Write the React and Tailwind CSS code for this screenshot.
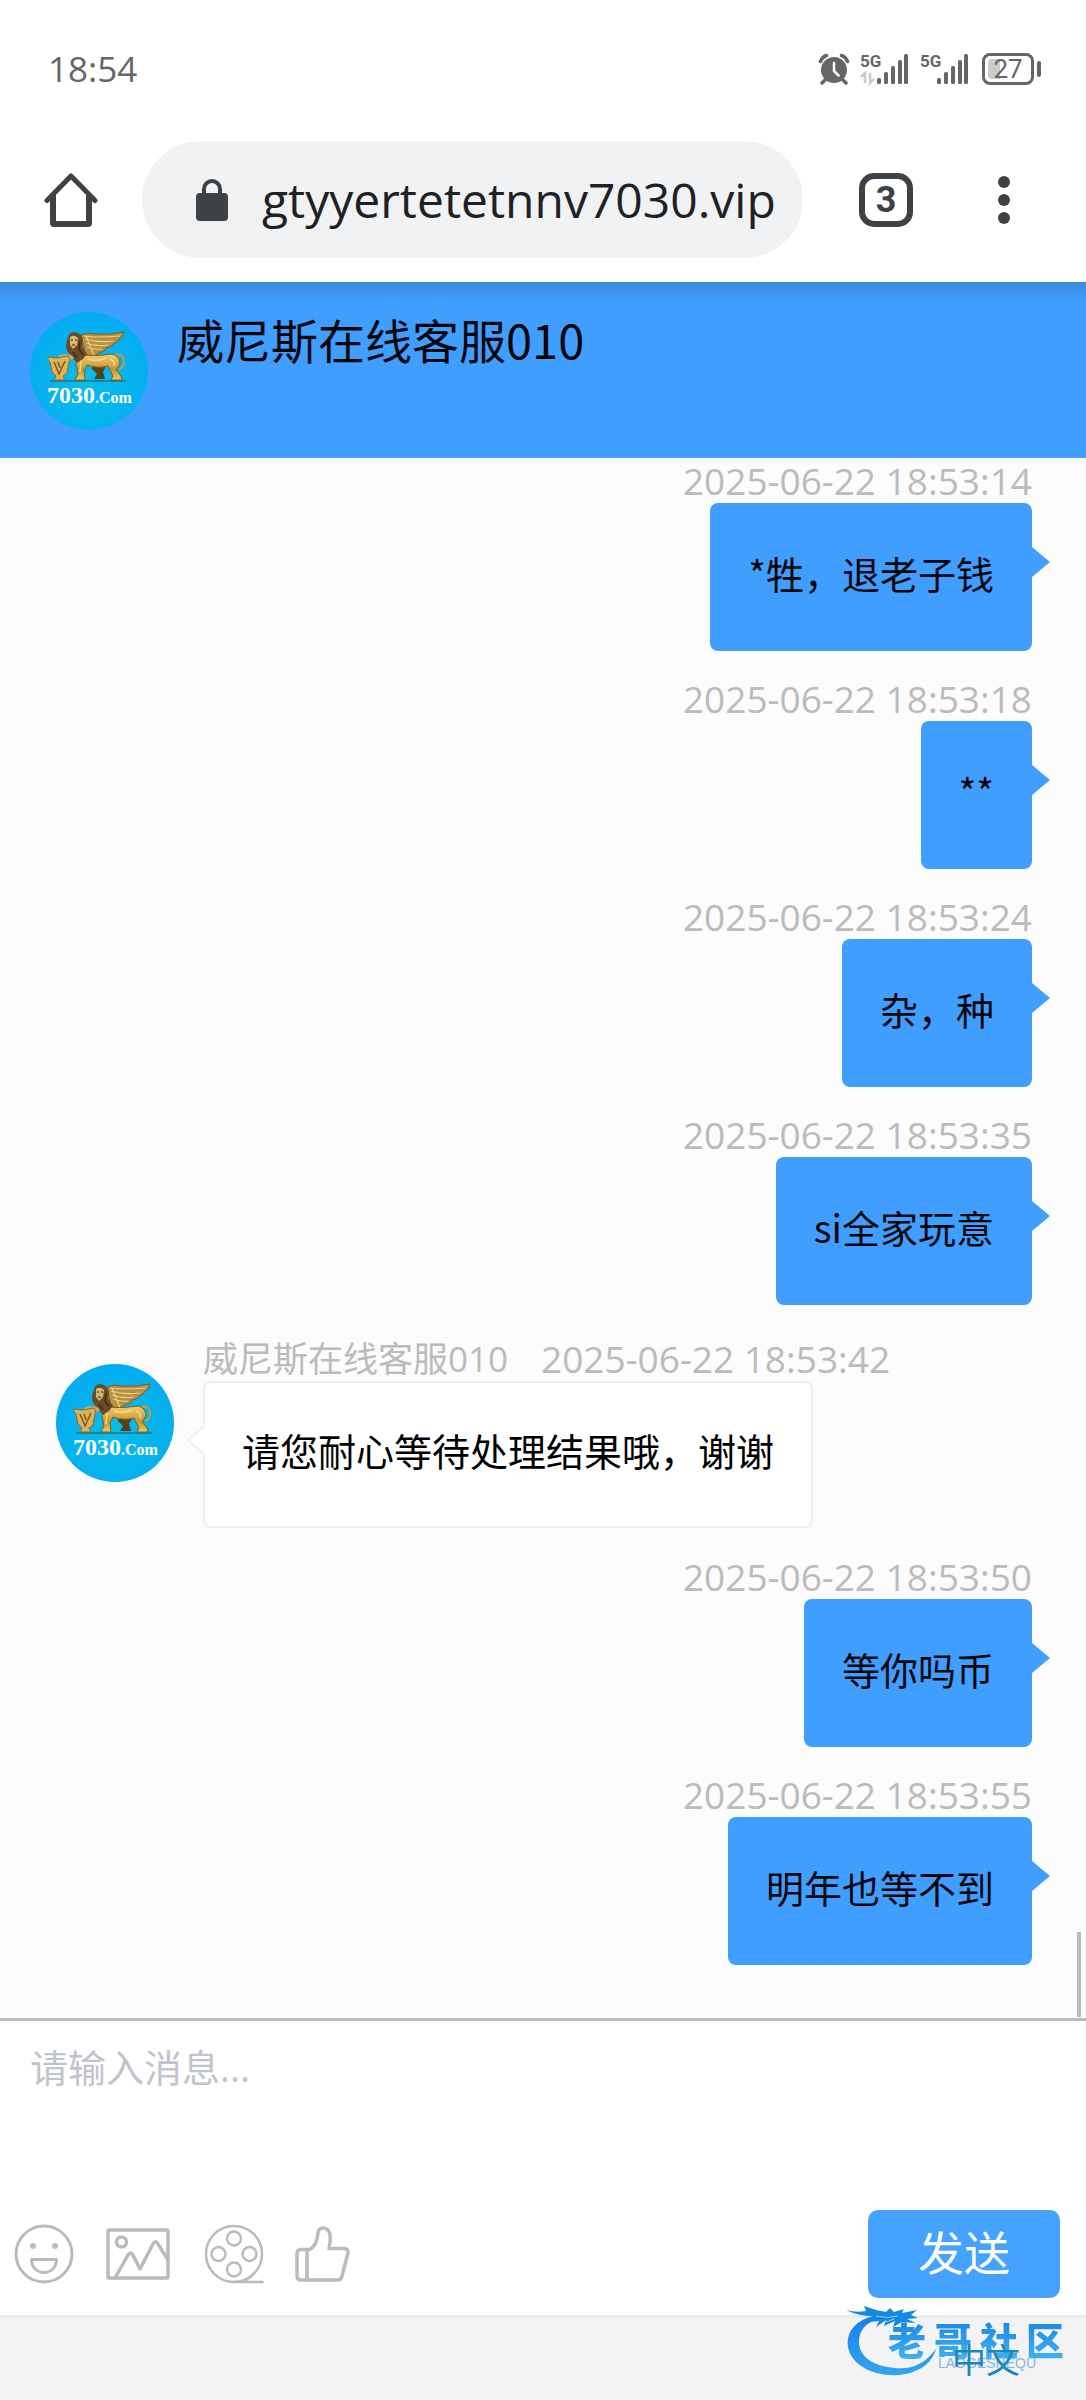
import React from 'react';

const AGENT = '威尼斯在线客服010';

const messages = [
    { id: 1, time: '2025-06-22 18:53:14', text: '*牲，退老子钱' },
    { id: 2, time: '2025-06-22 18:53:18', text: '**' },
    { id: 3, time: '2025-06-22 18:53:24', text: '杂，种' },
    { id: 4, time: '2025-06-22 18:53:35', text: 'si全家玩意' },
    { id: 5, time: '2025-06-22 18:53:42', text: '请您耐心等待处理结果哦，谢谢', from: AGENT },
    { id: 6, time: '2025-06-22 18:53:50', text: '等你吗币' },
    { id: 7, time: '2025-06-22 18:53:55', text: '明年也等不到' },
];

function SignalIcon({ data = false }) {
    return (
        <svg className="w-12 h-8 overflow-visible" viewBox="0 0 48 32" fill="#666">
            <text x="0" y="14" fontSize="17" fontWeight="700" fontFamily="Roboto, sans-serif">5G</text>
            <rect x="17" y="25" width="4" height="6" rx="1.5" />
            <rect x="24" y="19" width="4" height="12" rx="1.5" />
            <rect x="31" y="13" width="4" height="18" rx="1.5" />
            <rect x="38" y="7" width="4" height="24" rx="1.5" />
            <rect x="44" y="1" width="4" height="30" rx="1.5" />
            {data && (
                <path d="M1 24l4-4v10M10 20v10l4-4" fill="none" stroke="#ccc" strokeWidth="2.5" />
            )}
        </svg>
    );
}

function StatusBar() {
    return (
        <div className="flex items-center justify-between h-[120px] pt-[18px] pl-12 pr-[45px] text-[#666]">
            <span className="text-[35px] leading-10 font-medium">18:54</span>
            <div className="flex items-center">
                <svg className="w-8 h-8 mr-2.5" viewBox="0 0 32 32" fill="none" stroke="#666" strokeWidth="3.5" strokeLinecap="round">
                    <circle cx="16" cy="17" r="13" fill="#666" stroke="none" />
                    <path d="M2.500 8.500Q4 4 8.500 2.500M29.500 8.500Q28 4 23.500 2.500M7 27l-3 3M25 27l3 3" />
                    <path d="M16 10v8l4.500 4.500" stroke="#fff" strokeWidth="2.500" />
                </svg>
                <SignalIcon data />
                <div className="w-3" />
                <SignalIcon />
                <div className="flex items-center ml-3.5">
                    <div className="relative flex items-center justify-center w-[52px] h-8 border-[3px] border-[#666] rounded-lg">
                        <div className="absolute left-[3px] top-[3px] w-3 h-5 bg-[#ccc] rounded-l-sm" />
                        <span className="relative text-[26px] leading-6 font-['Roboto',sans-serif]">27</span>
                    </div>
                    <div className="w-1 h-4 ml-[3px] bg-[#666] rounded-sm" />
                </div>
            </div>
        </div>
    );
}

function BrowserBar() {
    return (
        <div className="flex items-center h-[162px] pb-3 pt-[9px] pl-11">
            <button type="button" aria-label="Home">
                <svg className="w-[54px] h-14" viewBox="0 0 54 56" fill="none" stroke="#3f4245" strokeWidth="6" strokeLinecap="round" strokeLinejoin="round">
                    <path d="M3 28.500L27 4l24 24.500" strokeWidth="5" />
                    <path d="M9 24v27q0 1 1 1h34q1 0 1-1V24" />
                </svg>
            </button>
            <div className="flex items-center flex-1 min-w-0 h-[117px] ml-11 pl-[54px] pr-5 bg-[#f0f2f4] rounded-full">
                <svg className="w-8 h-11 shrink-0" viewBox="0 0 32 44">
                    <rect x="0" y="15" width="32" height="28" rx="4" fill="#3f4245" />
                    <path d="M8 17v-6a8 8 0 0 1 16 0v6" fill="none" stroke="#3f4245" strokeWidth="4" />
                </svg>
                <input
                    type="text"
                    aria-label="Address"
                    defaultValue="gtyyertetetnnv7030.vip"
                    className="flex-1 min-w-0 ml-[34px] h-16 bg-transparent text-[48px] text-[#202124] outline-none"
                />
            </div>
            <button
                type="button"
                aria-label="Tabs"
                className="flex items-center justify-center w-[54px] h-[54px] ml-14 border-[6px] border-[#3f4245] rounded-[15px] text-[36px] leading-10 font-bold text-[#3f4245] font-['Roboto',sans-serif]"
            >
                3
            </button>
            <button type="button" aria-label="Menu" className="flex flex-col items-center gap-1.5 w-10 ml-[71px] mr-[62px]">
                <span className="w-3 h-3 rounded-full bg-[#3f4245]" />
                <span className="w-3 h-3 rounded-full bg-[#3f4245]" />
                <span className="w-3 h-3 rounded-full bg-[#3f4245]" />
            </button>
        </div>
    );
}

function Avatar() {
    return (
        <svg className="w-[118px] h-[118px] shrink-0" viewBox="0 0 118 118">
            <defs>
                <radialGradient id="sky" cx="50%" cy="60%" r="55%">
                    <stop offset="0" stopColor="#08bdea" />
                    <stop offset="1" stopColor="#04adf0" />
                </radialGradient>
                <linearGradient id="gold" x1="0" y1="0" x2="0" y2="1">
                    <stop offset="0" stopColor="#f0d070" />
                    <stop offset="0.600" stopColor="#c9952e" />
                    <stop offset="1" stopColor="#efcb64" />
                </linearGradient>
            </defs>
            <circle cx="59" cy="59" r="59" fill="url(#sky)" />
            <path d="M20 69h76" stroke="#1585a0" strokeWidth="2" />
            {/* wing */}
            <path d="M51 23Q58 20 66 22Q80 23 94 20Q94 24 89 27Q88 31 83 32Q81 36 76 36Q74 41 69 40L64 46L55 42Z" fill="#b98f40" stroke="#7d5a1e" strokeWidth="1" />
            <path d="M54 24q12 2 36 0M55 27q14 4 29 2M56 31q12 4 22 2M57 35q8 3 15 2M56 24l8 20" stroke="#ead08c" strokeWidth="1.200" fill="none" />
            {/* hind legs and tail */}
            <path d="M84 43Q94 41 94 49Q94 56 89 57" fill="none" stroke="#c99a3c" strokeWidth="2" />
            <path d="M63 50L77 52L73 60L75 67H64L67 62L62 57Z" fill="#55411c" />
            <path d="M48 42Q62 45 82 42Q90 44 90 52L86 58L91 64L92 68H81L83 64L78 54Q68 57 57 53L54 59L55 68H45L48 62L46 52Z" fill="url(#gold)" stroke="#845a14" strokeWidth="1" />
            <path d="M58 47q9 3 18-1M80 47q6 3 4 7M51 48l-1 12" stroke="#f6dc88" strokeWidth="1.500" fill="none" />
            {/* mane and face */}
            <path d="M38 26Q38 21 44 20Q51 21 53 27L52 35L57 42L53 47L47 51L42 45L38 40Q34 34 38 26Z" fill="#6b4a26" />
            <path d="M40 25Q44 22 48 26L47 33L43 37L40 33Z" fill="#d7b873" />
            <path d="M41 28h2M45 28h2M42 33h3M50 29l-1 8l4 6M43 40l4 6" stroke="#38250e" strokeWidth="1.200" fill="none" />
            {/* shield */}
            <path d="M28 45Q30 41 41 43L44 46L38 49Z" fill="#d7aa55" />
            <path d="M18 45L27 46L38 44Q41 46 39 50L37 61L33 64L35 68H24L26 64L22 60L20 50Q17 48 18 45Z" fill="#d9b45b" stroke="#8f681e" strokeWidth="1" />
            <path d="M24 50l5 12l6-13M28 50l2 6" stroke="#7d5714" strokeWidth="1.500" fill="none" />
            <text x="17" y="91" fill="#fff" fontFamily="'Liberation Serif', serif" fontWeight="700">
                <tspan fontSize="24">7030</tspan>
                <tspan fontSize="16">.Com</tspan>
            </text>
        </svg>
    );
}

function ChatHeader() {
    return (
        <header className="flex h-44 pt-[30px] pl-[30px] bg-[#409eff] bg-[linear-gradient(#3c89dc,#409eff_18px)]">
            <Avatar />
            <h1 className="-mt-1 ml-[29px] text-[47px] leading-[62px] text-[#04060c] font-['Noto_Sans_CJK_SC',sans-serif]">{AGENT}</h1>
        </header>
    );
}

function OwnMessage({ message }) {
    return (
        <li className="flex flex-col items-end mb-[25px] mr-[54px]">
            <time className="text-[37px] leading-[45px] text-[#bbb]">{message.time}</time>
            <div className="relative h-[148px] px-[38px] pt-[42px] bg-[#409eff] rounded-lg">
                <p className="text-[38px] leading-[56px] text-[#04060c] font-['Noto_Sans_CJK_SC',sans-serif]">{message.text}</p>
                <svg className="absolute left-full top-11 w-[18px] h-[30px]" viewBox="0 0 18 30" fill="#409eff">
                    <path d="M0 0L18 15L0 30Z" />
                </svg>
            </div>
        </li>
    );
}

function AgentMessage({ message }) {
    return (
        <li className="flex items-start mb-[26px] pt-1.5 pl-14">
            <div className="pt-7">
                <Avatar />
            </div>
            <div className="ml-[29px]">
                <div className="flex gap-[33px] text-[35px] leading-[45px] text-[#bbb]">
                    <span>{message.from}</span>
                    <time className="text-[37px]">{message.time}</time>
                </div>
                <div className="relative w-fit h-[147px] px-[37px] pt-[39px] bg-white border-2 border-[#eee] rounded-lg">
                    <p className="text-[38px] leading-[56px] text-black font-['Noto_Sans_CJK_SC',sans-serif]">{message.text}</p>
                    <svg className="absolute right-full top-[42px] w-[18px] h-[30px]" viewBox="0 0 18 30">
                        <path d="M20 0V30H18L1 15L18 1" fill="#fff" stroke="#eee" strokeWidth="2" />
                    </svg>
                </div>
            </div>
        </li>
    );
}

const iconProps = { fill: 'none', stroke: '#bbb', strokeLinecap: 'round', strokeLinejoin: 'round' };

function Composer() {
    return (
        <form className="flex flex-col bg-white border-t-[3px] border-[#bbb]" onSubmit={(e) => e.preventDefault()}>
            <textarea
                aria-label="请输入消息"
                placeholder="请输入消息..."
                className="block w-full h-[189px] px-[30px] pt-[18px] text-[38px] leading-[56px] placeholder:text-[#c0c4cc] resize-none outline-none"
            />
            <div className="flex items-center justify-between h-[88px] mb-[17px] pl-3.5 pr-[26px]">
                <div className="flex items-center">
                    <button type="button" aria-label="表情">
                        <svg className="w-[60px] h-[60px]" viewBox="0 0 60 60" {...iconProps} strokeWidth="3">
                            <circle cx="30" cy="30" r="28" />
                            <circle cx="19" cy="22" r="3" fill="#bbb" stroke="none" />
                            <circle cx="41" cy="22" r="3" fill="#bbb" stroke="none" />
                            <path d="M17.500 35.500H42.500C42.500 43 37 48.500 30 48.500S17.500 43 17.500 35.500Z" />
                        </svg>
                    </button>
                    <button type="button" aria-label="图片" className="ml-8">
                        <svg className="w-16 h-[52px]" viewBox="0 0 64 52" {...iconProps} strokeWidth="3.500">
                            <rect x="2" y="2" width="60" height="48" rx="1" />
                            <circle cx="15.500" cy="14" r="5" />
                            <path d="M9 50L22 27Q24.500 23 27 27L34 41L47 16Q49.500 11.500 52 16L62 32" />
                        </svg>
                    </button>
                    <button type="button" aria-label="视频" className="ml-[35px]">
                        <svg className="w-[59px] h-[60px]" viewBox="0 0 59 60" {...iconProps} strokeWidth="2.500">
                            <circle cx="29" cy="30" r="28" />
                            <circle cx="29" cy="14.500" r="7" />
                            <circle cx="13.500" cy="30" r="7" />
                            <circle cx="44.500" cy="30" r="7" />
                            <circle cx="29" cy="45.500" r="7" />
                            <path d="M29 58H57.500M38 57Q44 55 48 50" />
                        </svg>
                    </button>
                    <button type="button" aria-label="评价" className="ml-[31px]">
                        <svg className="w-[55px] h-14" viewBox="0 0 55 56" {...iconProps} strokeWidth="3.500">
                            <path d="M12 23.500H6Q2 23.500 2 28V50Q2 54 6 54H42Q46 54 47 50L53 27Q53 22.500 49 22.500H34Q36 15 35 8Q33 2 28 2Q23.500 2 23 7Q22 19 15 23.500H12V54" />
                        </svg>
                    </button>
                </div>
                <button type="submit" className="w-48 h-[88px] pb-1 bg-[#46a2ff] rounded-[10px] text-[46px] text-white">
                    发送
                </button>
            </div>
        </form>
    );
}

function Footer() {
    return (
        <footer className="relative flex justify-end h-[85px] pr-[66px] pt-[18px] bg-[#f3f3f3] border-t-[3px] border-[#ebebeb]">
            {/* community watermark stamped over the corner */}
            <div className="absolute right-[14px] -top-3 w-[226px] h-[78px]">
                <svg className="w-[110px] h-[72px]" viewBox="0 0 110 72" fill="#1489e4">
                    <defs>
                        <linearGradient id="ring" x1="0" y1="0" x2="0" y2="1">
                            <stop offset="0" stopColor="#1680e8" />
                            <stop offset="1" stopColor="#33a5ef" />
                        </linearGradient>
                    </defs>
                    <path d="M30 9C10 14 0 25 2 41C5 59 28 71 53 69C72 67 86 58 90 43C79 58 65 64 49 62C25 60 12 49 13 34C14 24 19 17 34 12Z" fill="url(#ring)" />
                    <path d="M0 4Q10 7 20 5L18 0L30 4L40 6L44 2L48 6L58 3L56 7L71 4L65 9L72 12L61 13L70 17L56 16L47 21L49 15L38 20L40 14L30 21L33 15L24 16L27 10Q12 10 0 4Z" />
                    <path d="M30 10q12 3 22 0M40 16l8-3" stroke="#8cc8f5" strokeWidth="1" fill="none" />
                </svg>
                <div className="absolute left-[42px] top-[9px] flex gap-2 text-[38px] leading-[48px] font-black text-transparent bg-linear-to-b from-[#1281e6] to-[#45b4f0] bg-clip-text font-['Noto_Sans_CJK_SC',sans-serif]">
                    <span>老</span>
                    <span>哥</span>
                    <span>社</span>
                    <span>区</span>
                </div>
                <span className="absolute left-[92px] top-[49px] text-[14px] leading-4 font-['Liberation_Sans',sans-serif] text-[#7db9e4]">LAOGESHEQU</span>
            </div>
            <button type="button" className="relative h-12 text-[34px] leading-[48px] text-[#1b88bd]">中文</button>
        </footer>
    );
}

export default function App() {
    return (
        <div className="flex flex-col min-h-screen bg-white font-['Open_Sans','Noto_Sans_CJK_SC',sans-serif]">
            <StatusBar />
            <BrowserBar />
            <ChatHeader />
            <main className="relative flex-1 bg-[#fcfcfc]">
                <ul>
                    {messages.map((message) => (
                        message.from
                            ? <AgentMessage key={message.id} message={message} />
                            : <OwnMessage key={message.id} message={message} />
                    ))}
                </ul>
                {/* scroll thumb */}
                <div className="absolute right-[5px] bottom-px w-1 h-[85px] bg-[#bbb]" />
            </main>
            <Composer />
            <Footer />
        </div>
    );
}
